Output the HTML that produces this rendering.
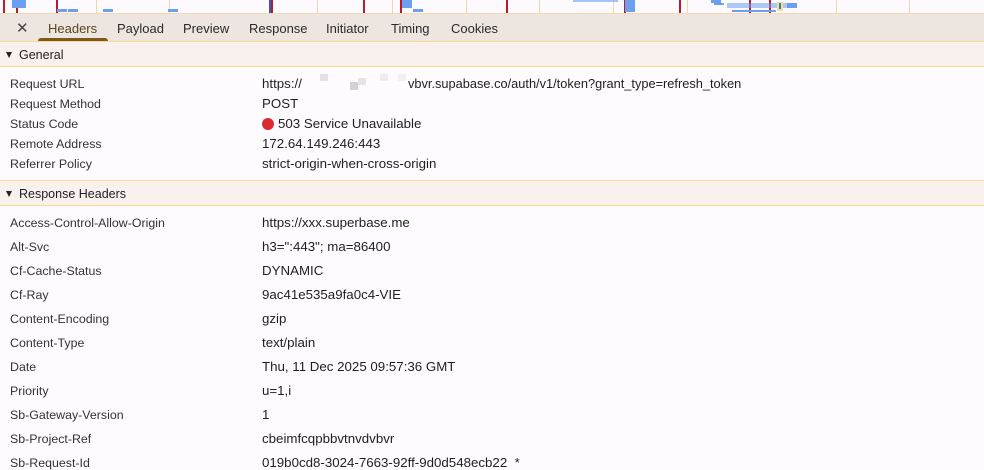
<!DOCTYPE html>
<html><head><meta charset="utf-8"><style>
*{margin:0;padding:0;box-sizing:border-box}
body{width:984px;height:463px;overflow:hidden;background:#fefbfe;font-family:"Liberation Sans",Arial,sans-serif;position:relative;color:#1f1f1f}
.a{position:absolute}
.tl{top:0;left:0;width:984px;height:13px;background:#fdfaff}
.v{position:absolute;top:0;width:1px;height:13px}
.r{background:#c0182b;width:1.5px}
.t{background:#f6d6a4}
.b{position:absolute;background:#6aa0ef}
.tabs{top:13px;left:0;width:984px;height:28px;background:#ede6e0;border-top:1px solid #f3d9b0}
.tab{position:absolute;top:7px;font-size:13px;color:#2a2a2a}
.sec{left:0;width:984px;height:26px;background:#f8f1ed;border-top:1px solid #fad98f;border-bottom:1px solid #fad98f;font-size:12.5px;color:#1f1f1f}
.sec span{position:absolute;left:19px;top:6px}
.sec i{position:absolute;left:6px;top:10px;width:0;height:0;border-left:3.5px solid transparent;border-right:3.5px solid transparent;border-top:6px solid #222}
.k{position:absolute;left:10px;font-size:12.4px;color:#333;margin-top:2px}
.val{position:absolute;left:262px;font-size:13.3px;color:#1f1f1f;margin-top:-1px}
</style></head><body>
<div class="a tl">
<div class="v r" style="left:3px"></div><div class="v r" style="left:16px"></div><div class="v r" style="left:56px"></div>
<div class="v" style="left:269px;background:#2a5bd0;width:1.5px"></div><div class="v r" style="left:271px"></div>
<div class="v r" style="left:363px;width:2px"></div><div class="v r" style="left:400px"></div>
<div class="v r" style="left:506px"></div><div class="v r" style="left:624px"></div><div class="v r" style="left:679px"></div><div class="v r" style="left:749px"></div><div class="v r" style="left:769px"></div>
<div class="v t" style="left:96px"></div><div class="v t" style="left:169px"></div><div class="v t" style="left:317px"></div><div class="v t" style="left:392px"></div><div class="v t" style="left:466px"></div><div class="v t" style="left:539px"></div><div class="v t" style="left:613px"></div><div class="v t" style="left:687px"></div><div class="v t" style="left:836px"></div><div class="v t" style="left:909px"></div>
<div class="b" style="left:12px;top:0;width:14px;height:8px"></div>
<div class="b" style="left:57px;top:9px;width:10px;height:3px"></div><div class="b" style="left:68px;top:9px;width:10px;height:3px"></div>
<div class="b" style="left:103px;top:9px;width:10px;height:3px"></div><div class="b" style="left:168px;top:9px;width:10px;height:3px"></div>
<div class="b" style="left:402px;top:0;width:10px;height:8px"></div><div class="b" style="left:413px;top:9px;width:10px;height:3px"></div>
<div class="b" style="left:573px;top:0;width:45px;height:2px;opacity:.6"></div>
<div class="b" style="left:625px;top:0;width:10px;height:12px"></div>
<div class="b" style="left:711px;top:0;width:10px;height:3px"></div><div class="b" style="left:714px;top:3px;width:10px;height:2px"></div>
<div class="b" style="left:727px;top:3px;width:60px;height:5px;opacity:.55"></div><div class="b" style="left:787px;top:3px;width:10px;height:5px"></div>
<div class="b" style="left:732px;top:10px;width:44px;height:2px"></div>
<div class="a" style="left:777px;top:2px;width:6px;height:9px;background:#f7d9a8"></div><div class="a" style="left:779px;top:3px;width:2px;height:6px;background:#2a8c7c"></div>
</div>
<div class="a tabs">
<div class="tab" style="left:16px;top:5px;font-size:15px;color:#444">✕</div>
<div class="tab" style="left:48px;color:#5a4620">Headers</div>
<div class="a" style="left:38px;top:24px;width:70px;height:3px;background:#7a5a1e;border-radius:3px 3px 0 0"></div>
<div class="tab" style="left:117px">Payload</div>
<div class="tab" style="left:183px">Preview</div>
<div class="tab" style="left:249px">Response</div>
<div class="tab" style="left:326px">Initiator</div>
<div class="tab" style="left:391px">Timing</div>
<div class="tab" style="left:451px">Cookies</div>
</div>
<div class="a sec" style="top:41px"><i></i><span>General</span></div>
<div class="k" style="top:75px">Request URL</div><div class="val" style="top:77px">https://</div><div class="val" style="top:77px;left:408px;font-size:12.8px">vbvr.supabase.co/auth/v1/token?grant_type=refresh_token</div>
<div class="a" style="left:320px;top:74px;width:8px;height:7px;background:#e4e1e6"></div>
<div class="a" style="left:350px;top:82px;width:8px;height:8px;background:#d4d1d6"></div>
<div class="a" style="left:358px;top:78px;width:8px;height:7px;background:#e6e3e8"></div>
<div class="a" style="left:380px;top:74px;width:8px;height:7px;background:#efecf1"></div>
<div class="a" style="left:398px;top:74px;width:8px;height:7px;background:#f3f0f5"></div>
<div class="k" style="top:95px">Request Method</div><div class="val" style="top:97px">POST</div>
<div class="k" style="top:115px">Status Code</div><div class="val" style="top:117px"><span style="display:inline-block;width:12px;height:12px;border-radius:50%;background:#d92a2e;vertical-align:-2px;margin-right:4px"></span>503 Service Unavailable</div>
<div class="k" style="top:135px">Remote Address</div><div class="val" style="top:137px">172.64.149.246:443</div>
<div class="k" style="top:155px">Referrer Policy</div><div class="val" style="top:157px">strict-origin-when-cross-origin</div>
<div class="a sec" style="top:180px"><i></i><span>Response Headers</span></div>
<div class="k" style="top:214px">Access-Control-Allow-Origin</div><div class="val" style="top:216px">https://xxx.superbase.me</div>
<div class="k" style="top:238px">Alt-Svc</div><div class="val" style="top:240px">h3=":443"; ma=86400</div>
<div class="k" style="top:262px">Cf-Cache-Status</div><div class="val" style="top:264px">DYNAMIC</div>
<div class="k" style="top:286px">Cf-Ray</div><div class="val" style="top:288px">9ac41e535a9fa0c4-VIE</div>
<div class="k" style="top:310px">Content-Encoding</div><div class="val" style="top:312px">gzip</div>
<div class="k" style="top:334px">Content-Type</div><div class="val" style="top:336px">text/plain</div>
<div class="k" style="top:358px">Date</div><div class="val" style="top:360px">Thu, 11 Dec 2025 09:57:36 GMT</div>
<div class="k" style="top:382px">Priority</div><div class="val" style="top:384px">u=1,i</div>
<div class="k" style="top:406px">Sb-Gateway-Version</div><div class="val" style="top:408px">1</div>
<div class="k" style="top:430px">Sb-Project-Ref</div><div class="val" style="top:432px">cbeimfcqpbbvtnvdvbvr</div>
<div class="k" style="top:454px">Sb-Request-Id</div><div class="val" style="top:456px">019b0cd8-3024-7663-92ff-9d0d548ecb22 &nbsp;*</div>
</body></html>
